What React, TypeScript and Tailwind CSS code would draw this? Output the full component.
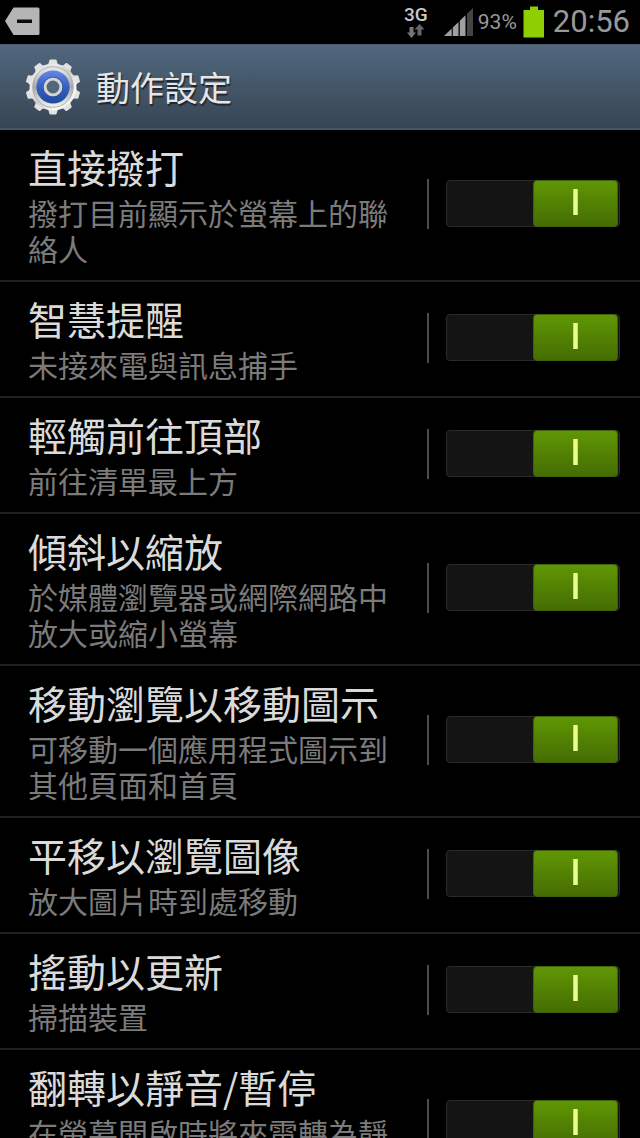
import { useState } from "react";

const settings = [
  { id: "direct-call", title: "直接撥打", description: "撥打目前顯示於螢幕上的聯絡人" },
  { id: "smart-alert", title: "智慧提醒", description: "未接來電與訊息捕手" },
  { id: "double-tap", title: "輕觸前往頂部", description: "前往清單最上方" },
  { id: "tilt-zoom", title: "傾斜以縮放", description: "於媒體瀏覽器或網際網路中放大或縮小螢幕" },
  { id: "pan-icon", title: "移動瀏覽以移動圖示", description: "可移動一個應用程式圖示到其他頁面和首頁" },
  { id: "pan-image", title: "平移以瀏覽圖像", description: "放大圖片時到處移動" },
  { id: "shake-update", title: "搖動以更新", description: "掃描裝置" },
  { id: "turn-over", title: "翻轉以靜音/暫停", description: "在螢幕開啟時將來電轉為靜音" },
];

const teeth = [0, 36, 72, 108, 144, 180, 216, 252, 288, 324];

function GearIcon() {
  return (
    <svg viewBox="0 0 54 56" className="w-[54px] h-14 shrink-0" aria-hidden="true">
      <defs>
        <linearGradient id="metal" x1="0" y1="0" x2="1" y2="1">
          <stop offset="0" stopColor="#d8d8d8" />
          <stop offset="0.3" stopColor="#ececec" />
          <stop offset="0.5" stopColor="#cccccc" />
          <stop offset="0.75" stopColor="#f8f8f8" />
          <stop offset="1" stopColor="#e4e4e4" />
        </linearGradient>
        <linearGradient id="rim" x1="0" y1="0" x2="0" y2="1">
          <stop offset="0" stopColor="#ededed" />
          <stop offset="0.5" stopColor="#a8a8a8" />
          <stop offset="1" stopColor="#f2f2f2" />
        </linearGradient>
        <linearGradient id="blue" x1="0" y1="0" x2="0" y2="1">
          <stop offset="0" stopColor="#6688e6" />
          <stop offset="0.5" stopColor="#3560c2" />
          <stop offset="1" stopColor="#1d4a9c" />
        </linearGradient>
      </defs>
      <g fill="#e2e2e2">
        {teeth.map((angle) => (
          <path key={angle} d="M18.5 8 Q22.300 6 22.800 3.800 L23.300 1.400 Q23.500 0.500 24.500 0.500 H29.500 Q30.500 0.500 30.700 1.400 L31.200 3.800 Q31.700 6 35.500 8 Z" transform={`rotate(${angle} 27 28)`} />
        ))}
      </g>
      <circle cx="27" cy="28" r="23.500" fill="url(#metal)" />
      <circle cx="27" cy="28" r="20.300" fill="url(#rim)" stroke="#a2a2a2" strokeWidth="0.8" />
      <circle cx="27" cy="28" r="16.600" fill="url(#blue)" />
      <circle cx="27" cy="28" r="8" fill="#52677c" stroke="#d4d4d4" strokeWidth="3.2" />
      <circle cx="27" cy="28" r="9.900" fill="none" stroke="#24468c" strokeWidth="0.6" />
    </svg>
  );
}

function StatusBar() {
  return (
    <div className="flex h-11 shrink-0 items-center justify-between pl-1 pr-2.5 font-['Roboto',sans-serif] text-[#999999]">
      <svg viewBox="0 0 36 30" className="w-9 h-[30px]" aria-hidden="true">
        <path d="M1 14 L9.5 0.5 H34 Q35.5 0.5 35.5 2 V26.500 Q35.500 28 34 28 H9.500 Z" fill="#b5b5b5" />
        <path d="M13 12.500 H28 V16 H13 Z" fill="#0a0a0a" />
      </svg>
      <div className="flex items-center gap-1">
        <div className="mr-3 flex flex-col items-center gap-px">
          <span className="text-[19px] leading-4 font-medium text-[#c8c8c8]">3G</span>
          <svg viewBox="0 0 18 14" className="w-[18px] h-3.5" aria-hidden="true">
            <path d="M2.500 3 H6.500 V8.500 H9 L4.500 14 L0 8.500 H2.500 Z" fill="#777777" />
            <path d="M10.500 11.500 H14.500 V5.500 H17.500 L12.500 0 L7.500 5.500 H10.500 Z" fill="#666666" />
          </svg>
        </div>
        <svg viewBox="0 0 30 28" className="w-[30px] h-7" aria-hidden="true">
          <path d="M0 28 L7.700 20.600 V28 Z M8.800 28 V19.500 L14.500 14 V28 Z M15.800 28 V12.800 L21.500 7.300 V28 Z" fill="#a0a0a0" />
          <path d="M23 28 V5.800 L29 0 V28 Z" fill="#444444" />
        </svg>
        <span className="text-[21px] leading-6">93%</span>
        <svg viewBox="0 0 22 32" className="ml-0.5 w-[22px] h-8" aria-hidden="true">
          <path d="M7 0.500 H15 V4 H21 V31.500 H0.500 V4 H7 Z" fill="#8fce00" />
        </svg>
        <span className="ml-1 text-[31px] leading-9">20:56</span>
      </div>
    </div>
  );
}

export default function App() {
  const [enabled, setEnabled] = useState<Record<string, boolean>>({});

  return (
    <div className="flex h-screen flex-col overflow-hidden bg-black font-['Noto_Sans_CJK_TC',sans-serif]" lang="zh-Hant">
      <StatusBar />
      <header className="flex h-[86px] shrink-0 items-center gap-4 border-t border-b-2 border-t-[#4b5d6c] border-b-[#43566a] bg-linear-to-b from-[#51687e] to-[#374554] px-[26px]">
        <GearIcon />
        <h1 className="text-[34px] leading-10 text-[#e6e6e6] [text-shadow:1px_2px_1px_#1c252e]">動作設定</h1>
      </header>
      <ul className="min-h-0 flex-1 overflow-y-auto [scrollbar-width:none]">
        {settings.map((item) => (
          <li key={item.id} className="flex items-center border-b-2 border-[#202020] pl-7 pr-5">
            <label htmlFor={item.id} className="min-w-0 flex-1 pt-2.5 pb-3.5 pr-4">
              <span className="block text-[39px] leading-[52px] text-[#dadada]">{item.title}</span>
              <span className="mt-0.5 block text-[30px] leading-9 text-[#7b7b7b]">{item.description}</span>
            </label>
            <div className="mb-[3px] flex items-center gap-[17px]">
              <span className="h-[50px] w-0.5 bg-[#4c4c4c]" />
              <div className="relative h-[47px] w-[174px]">
                <input
                  id={item.id}
                  type="checkbox"
                  role="switch"
                  checked={enabled[item.id] ?? true}
                  onChange={(e) => setEnabled({ ...enabled, [item.id]: e.target.checked })}
                  className="peer block h-full w-full appearance-none rounded-sm border border-[#2a2a2a] bg-[#141414]"
                />
                <span className="pointer-events-none absolute inset-y-0 left-0 flex w-[85px] justify-center rounded-sm border border-[#333333] bg-[#3a3a3a] pt-2 peer-checked:left-[87px] peer-checked:border-[#3f6406] peer-checked:bg-linear-to-b peer-checked:from-[#609704] peer-checked:to-[#456c03]">
                  <span className="h-[26px] w-[5px] border-x border-[#c3e35a] bg-[#ecff93]" />
                </span>
              </div>
            </div>
          </li>
        ))}
      </ul>
    </div>
  );
}
